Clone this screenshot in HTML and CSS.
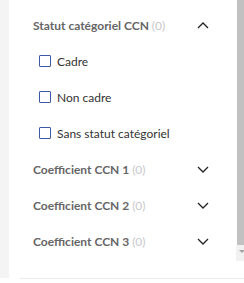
FILE: index.html
```html
<!DOCTYPE html>
<html lang="fr">
<head>
  <meta charset="UTF-8" />
  <title>Filtres</title>
  <link rel="stylesheet" href="styles.css">
</head>
<body>
  <div class="frame">
    <div class="strip"></div>
    <div class="panel">
      <div class="group">
        <div class="group-head">
          <span class="title">Statut catégoriel CCN <span class="count">(0)</span></span>
          <svg class="chev" width="12" height="7" viewBox="0 0 12 7"><path d="M1 6 L6 1 L11 6" fill="none" stroke="#222" stroke-width="1.3"/></svg>
        </div>
        <label class="option"><span class="box"></span>Cadre</label>
        <label class="option"><span class="box"></span>Non cadre</label>
        <label class="option"><span class="box"></span>Sans statut catégoriel</label>
      </div>
      <div class="group-head">
        <span class="title">Coefficient CCN 1 <span class="count">(0)</span></span>
        <svg class="chev" width="12" height="7" viewBox="0 0 12 7"><path d="M1 1 L6 6 L11 1" fill="none" stroke="#222" stroke-width="1.3"/></svg>
      </div>
      <div class="group-head">
        <span class="title">Coefficient CCN 2 <span class="count">(0)</span></span>
        <svg class="chev" width="12" height="7" viewBox="0 0 12 7"><path d="M1 1 L6 6 L11 1" fill="none" stroke="#222" stroke-width="1.3"/></svg>
      </div>
      <div class="group-head">
        <span class="title">Coefficient CCN 3 <span class="count">(0)</span></span>
        <svg class="chev" width="12" height="7" viewBox="0 0 12 7"><path d="M1 1 L6 6 L11 1" fill="none" stroke="#222" stroke-width="1.3"/></svg>
      </div>
    </div>
    <div class="scroll">
      <div class="thumb"></div>
      <div class="track"><span class="arrow"></span></div>
    </div>
  </div>
  <div class="footer-line"></div>
</body>
</html>
```

FILE: styles.css
```css
body {
  margin: 0;
  background: #fff;
  font-family: Lato, 'Liberation Sans', sans-serif;
}

.frame {
  display: flex;
  height: 278px;
}

.strip {
  width: 9px;
  background: #f4f4f4;
}

.panel {
  flex: 1;
  background: #fff;
  padding: 7px 0 0 24px;
}

.group-head {
  display: flex;
  justify-content: space-between;
  align-items: center;
  height: 36px;
  padding-right: 27px;
}

.title {
  font-size: 12px;
  font-weight: bold;
  color: #666;
}

.count {
  font-weight: normal;
  color: #c8c8c8;
}

.chev {
  display: block;
}

.option {
  display: flex;
  align-items: center;
  height: 36px;
  padding-left: 6px;
  font-size: 12px;
  color: #333;
}

.box {
  width: 10px;
  height: 10px;
  border: 1px solid #3d59a6;
  border-radius: 1px;
  margin-right: 6px;
}

.scroll {
  width: 8px;
  display: flex;
  flex-direction: column;
}

.thumb {
  height: 245px;
  margin-left: 1px;
  background: #c1c1c1;
}

.track {
  height: 16px;
  background: #f1f1f1;
  position: relative;
}

.arrow {
  position: absolute;
  left: 3px;
  top: 5px;
  border-left: 3px solid transparent;
  border-right: 3px solid transparent;
  border-top: 3px solid #a3a3a3;
}

.footer-line {
  margin-left: 20px;
  height: 1px;
  background: #ececec;
}
```
